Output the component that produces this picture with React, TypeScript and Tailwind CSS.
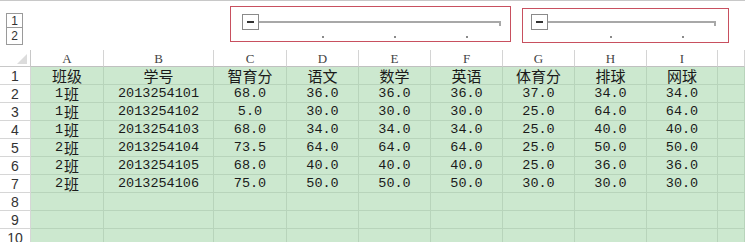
import React from "react";

const cols = "grid grid-cols-[31px_73px_110px_73px_72px_72px_72px_72px_72px_71px_1fr]";
const letters = ["A", "B", "C", "D", "E", "F", "G", "H", "I", ""];

const head = ["班级", "学号", "智育分", "语文", "数学", "英语", "体育分", "排球", "网球"];
const rows = [
  ["1", "2013254101", "68.0", "36.0", "36.0", "36.0", "37.0", "34.0", "34.0"],
  ["1", "2013254102", "5.0", "30.0", "30.0", "30.0", "25.0", "64.0", "64.0"],
  ["1", "2013254103", "68.0", "34.0", "34.0", "34.0", "25.0", "40.0", "40.0"],
  ["2", "2013254104", "73.5", "64.0", "64.0", "64.0", "25.0", "50.0", "50.0"],
  ["2", "2013254105", "68.0", "40.0", "40.0", "40.0", "25.0", "36.0", "36.0"],
  ["2", "2013254106", "75.0", "50.0", "50.0", "50.0", "30.0", "30.0", "30.0"],
];

const mono = "font-['Liberation_Mono','Noto_Sans_CJK_SC',monospace]";

function GroupBar() {
  return (
    <div className="flex items-center h-[17px]">
      <div className="w-[17px] h-[16px] border border-[#8a8a8a] bg-white flex items-center justify-center">
        <div className="w-[7px] h-[2px] bg-[#333]" />
      </div>
      <div className="flex-1 h-[2px] bg-[#a8a8a8] relative mr-[2px]">
        <div className="absolute right-0 top-0 w-[2px] h-[5px] bg-[#a8a8a8]" />
      </div>
    </div>
  );
}

function Dot() {
  return (
    <div className="flex justify-center">
      <div className="w-[2px] h-[2px] bg-[#8a8a8a]" />
    </div>
  );
}

function Cell({ children, cjk }: { children?: React.ReactNode; cjk?: boolean }) {
  return (
    <div
      className={`h-[18px] flex items-center justify-center leading-none border-r border-b border-[#b8d4bb] bg-[#cce8cf] text-[#1a1a1a] whitespace-nowrap ${cjk ? "text-[15px] font-['Noto_Sans_CJK_SC',sans-serif]" : `text-[13.5px] ${mono}`}`}
    >
      {children}
    </div>
  );
}

function RowHead({ n }: { n: number }) {
  return (
    <div className="h-[18px] flex items-center justify-center leading-none border-r border-b border-[#d6d6d6] bg-white text-[14px] text-[#333] font-['Liberation_Sans',Arial,sans-serif]">
      {n}
    </div>
  );
}

export default function App() {
  return (
    <div className="w-[745px] h-[242px] overflow-hidden bg-white relative">
      {/* outline area */}
      <div className={`${cols} h-[50px] border-t border-[#c8c8c8] grid-rows-[12px_17px_6px_1fr]`}>
        <div className="row-start-2 row-span-3 col-start-1 pl-[6px] flex flex-col">
          <div className="w-[17px] h-[15px] border border-[#9a9a9a] flex items-center justify-center text-[12px] leading-none text-[#333] font-['Liberation_Sans',sans-serif]">1</div>
          <div className="w-[17px] h-[17px] border border-t-0 border-[#9a9a9a] flex items-center justify-center text-[12px] leading-none text-[#333] font-['Liberation_Sans',sans-serif]">2</div>
        </div>
        <div className="row-start-2 col-start-4 col-end-8 pl-[28px]">
          <GroupBar />
        </div>
        <div className="row-start-2 col-start-8 col-end-11 pl-[28px]">
          <GroupBar />
        </div>
        <div className="row-start-4 col-start-5"><Dot /></div>
        <div className="row-start-4 col-start-6"><Dot /></div>
        <div className="row-start-4 col-start-7"><Dot /></div>
        <div className="row-start-4 col-start-9"><Dot /></div>
        <div className="row-start-4 col-start-10"><Dot /></div>
      </div>

      {/* column headers */}
      <div className={`${cols} h-[17px]`}>
        <div className="border-r border-b border-[#c8c8c8] relative">
          <div className="absolute right-[3px] bottom-[2px] w-0 h-0 border-l-[10px] border-l-transparent border-b-[10px] border-b-[#dcdcdc]" />
        </div>
        {letters.map((l, i) => (
          <div
            key={i}
            className="flex items-end justify-center pb-[1px] border-r border-b border-[#d4d4d4] border-b-[#c0c0c0] text-[13px] leading-none text-[#444] font-['Liberation_Serif',serif]"
          >
            {l}
          </div>
        ))}
      </div>

      {/* grid */}
      <div className={cols}>
        <RowHead n={1} />
        {head.map((h, i) => (
          <Cell key={i} cjk>{h}</Cell>
        ))}
        <Cell />
        {rows.map((r, ri) => (
          <React.Fragment key={ri}>
            <RowHead n={ri + 2} />
            <Cell>
              <span>{r[0]}</span>
              <span className="ml-[1px] text-[15px] font-['Noto_Sans_CJK_SC',sans-serif]">班</span>
            </Cell>
            {r.slice(1).map((v, i) => (
              <Cell key={i}>{v}</Cell>
            ))}
            <Cell />
          </React.Fragment>
        ))}
        {[8, 9, 10].map((n) => (
          <React.Fragment key={n}>
            <RowHead n={n} />
            {Array.from({ length: 10 }).map((_, i) => (
              <Cell key={i} />
            ))}
          </React.Fragment>
        ))}
      </div>

      {/* annotation boxes */}
      <div className="absolute left-[230px] top-[6px] w-[281px] h-[36px] border border-[#c8505f]" />
      <div className="absolute left-[522px] top-[8px] w-[207px] h-[35px] border border-[#c8505f]" />
    </div>
  );
}
